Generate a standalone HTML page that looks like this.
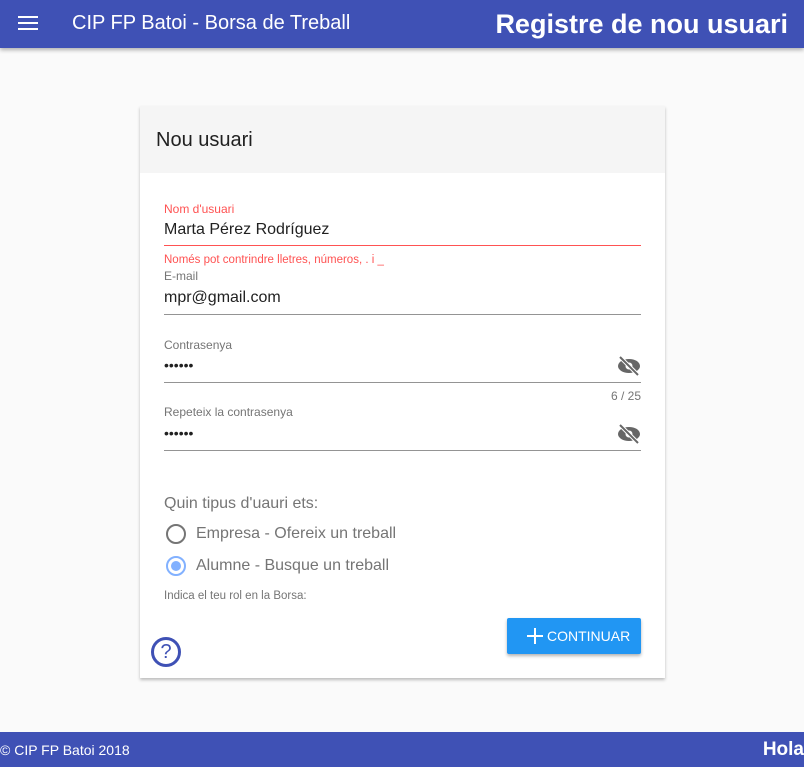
<!DOCTYPE html>
<html><head><meta charset="utf-8"><style>
*{box-sizing:border-box;margin:0;padding:0}
body{width:804px;height:767px;background:#fafafa;font-family:"Liberation Sans",sans-serif;position:relative;overflow:hidden}
.top{position:absolute;left:0;top:0;width:804px;height:48px;background:#3f51b5;color:#fff;box-shadow:0 2px 4px rgba(0,0,0,.3)}
.abs{position:absolute;white-space:nowrap}
.card{position:absolute;left:140px;top:106px;width:525px;height:572px;background:#fff;box-shadow:0 2px 3px rgba(0,0,0,.25)}
.ch{height:67px;background:#f5f5f5;padding:23px 16px;font-size:20px;color:#212121}
.lbl{font-size:12px;color:#757575}
.val{font-size:16px;color:#212121}
.line{position:absolute;left:24px;width:477px;height:1px;background:#949494}
.foot{position:absolute;left:0;top:732px;width:804px;height:35px;background:#3f51b5;color:#fff}
</style></head><body>
<div class="top">
<svg class="abs" style="left:18px;top:15px" width="20" height="16"><rect y="1" width="20" height="2" fill="#fff"/><rect y="7" width="20" height="2" fill="#fff"/><rect y="13" width="20" height="2" fill="#fff"/></svg>
<div class="abs" style="left:72px;top:12px;font-size:20px">CIP FP Batoi - Borsa de Treball</div>
<div class="abs" style="right:16px;top:9px;font-size:27px;font-weight:bold">Registre de nou usuari</div>
</div>
<div class="card">
<div class="ch">Nou usuari</div>
<div class="abs lbl" style="left:24px;top:96px;color:#ff5252">Nom d'usuari</div>
<div class="abs val" style="left:24px;top:115px">Marta Pérez Rodríguez</div>
<div class="line" style="top:139px;background:#ff5252"></div>
<div class="abs lbl" style="left:24px;top:148px;color:#ff5252;font-size:11.5px">Només pot contrindre lletres, números, . i _</div>
<div class="abs lbl" style="left:24px;top:163px">E-mail</div>
<div class="abs val" style="left:24px;top:183px">mpr@gmail.com</div>
<div class="line" style="top:208px"></div>
<div class="abs lbl" style="left:24px;top:232px">Contrasenya</div>
<div class="abs val" style="left:24px;top:251px;font-size:14px">••••••</div>
<svg class="abs" style="left:477px;top:249px" width="24" height="22" viewBox="0 0 24 22"><ellipse cx="12" cy="11" rx="11" ry="7" fill="#666"/><circle cx="12" cy="11" r="3.5" fill="#fff"/><line x1="3" y1="2" x2="21" y2="20" stroke="#fff" stroke-width="4"/><line x1="3" y1="2" x2="21" y2="20" stroke="#666" stroke-width="2"/></svg>
<div class="line" style="top:276px"></div>
<div class="abs lbl" style="right:24px;top:283px">6 / 25</div>
<div class="abs lbl" style="left:24px;top:299px">Repeteix la contrasenya</div>
<div class="abs val" style="left:24px;top:319px;font-size:14px">••••••</div>
<svg class="abs" style="left:477px;top:317px" width="24" height="22" viewBox="0 0 24 22"><ellipse cx="12" cy="11" rx="11" ry="7" fill="#666"/><circle cx="12" cy="11" r="3.5" fill="#fff"/><line x1="3" y1="2" x2="21" y2="20" stroke="#fff" stroke-width="4"/><line x1="3" y1="2" x2="21" y2="20" stroke="#666" stroke-width="2"/></svg>
<div class="line" style="top:344px"></div>
<div class="abs" style="left:24px;top:389px;font-size:16px;color:#757575">Quin tipus d'uauri ets:</div>
<div class="abs" style="left:26px;top:418px;width:20px;height:20px;border:2px solid #757575;border-radius:50%"></div>
<div class="abs" style="left:56px;top:419px;font-size:16px;color:#757575">Empresa - Ofereix un treball</div>
<div class="abs" style="left:26px;top:450px;width:20px;height:20px;border:2px solid #82b1ff;border-radius:50%"><div style="margin:3px;width:10px;height:10px;border-radius:50%;background:#82b1ff"></div></div>
<div class="abs" style="left:56px;top:451px;font-size:16px;color:#757575">Alumne - Busque un treball</div>
<div class="abs lbl" style="left:24px;top:484px;font-size:11.5px">Indica el teu rol en la Borsa:</div>
<div class="abs" style="left:367px;top:512px;width:134px;height:36px;background:#2196f3;color:#fff;border-radius:2px;box-shadow:0 2px 3px rgba(0,0,0,.3);font-size:14px;padding:10px 0 0 40px">CONTINUAR</div>
<svg class="abs" style="left:387px;top:522px" width="16" height="16"><rect x="7" y="0" width="2" height="16" fill="#fff"/><rect x="0" y="7" width="16" height="2" fill="#fff"/></svg>
<div class="abs" style="left:11px;top:531px;width:30px;height:30px;border:3px solid #3f51b5;border-radius:50%;color:#3f51b5;font-size:20px;text-align:center;line-height:25px">?</div>
</div>
<div class="foot">
<div class="abs" style="left:0;top:10px;font-size:14px">© CIP FP Batoi 2018</div>
<div class="abs" style="right:0;top:7px;font-size:19px;font-weight:bold">Hola</div>
</div>
</body></html>
